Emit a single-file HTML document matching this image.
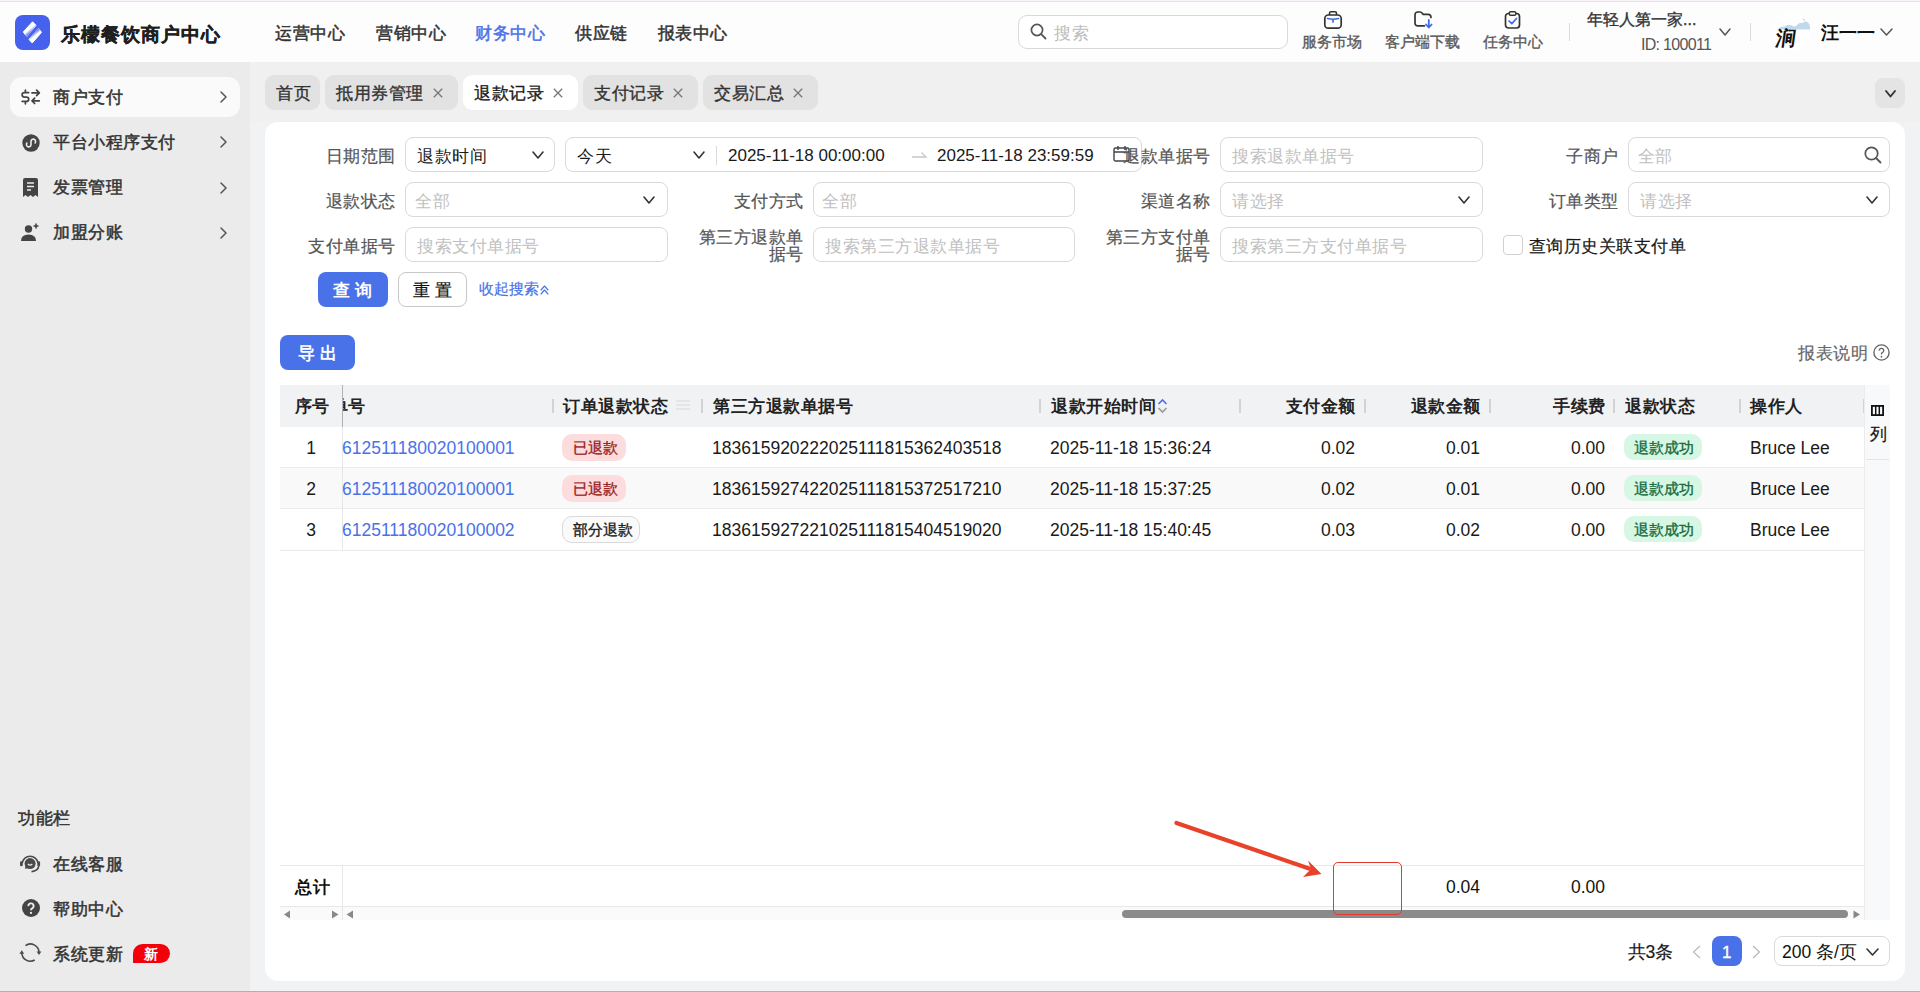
<!DOCTYPE html>
<html><head><meta charset="utf-8">
<style>
*{box-sizing:border-box;margin:0;padding:0}
html,body{width:1920px;height:992px;overflow:hidden}
body{position:relative;font-family:"Liberation Sans",sans-serif;font-size:17.5px;color:#222;background:#f1f2f4}
.a{position:absolute}
.t{position:absolute;white-space:nowrap;line-height:1}
svg{overflow:visible}
</style></head>
<body>
<div class="a" style="left:0px;top:0px;width:1920px;height:62px;background:#fdfdfd;"></div>
<div class="a" style="left:0px;top:0px;width:1920px;height:1px;background:#fbf3fb;"></div>
<div class="a" style="left:0px;top:1px;width:1920px;height:1px;background:#e6e0ea;"></div>
<div class="a" style="left:0px;top:62px;width:250px;height:930px;background:#ebebeb;"></div>
<div class="a" style="left:250px;top:62px;width:1670px;height:60px;background:#f0f0f0;"></div>
<div class="a" style="left:265px;top:122px;width:1640px;height:859px;background:#ffffff;border-radius:13px"></div>
<div class="a" style="left:0px;top:991px;width:1920px;height:1px;background:#b9aea6;"></div>
<div class="a" style="left:15px;top:15px;width:35px;height:35px;background:#4561ee;border-radius:8px"></div>
<svg class="a" style="left:15px;top:15px" width="35" height="35" viewBox="0 0 35 35"><defs><linearGradient id="g1" gradientUnits="userSpaceOnUse" x1="12.9" y1="11.9" x2="16.6" y2="16.2"><stop offset="0" stop-color="#fff"/><stop offset="0.5" stop-color="#fff"/><stop offset="1" stop-color="#fff" stop-opacity="0.25"/></linearGradient><linearGradient id="g2" gradientUnits="userSpaceOnUse" x1="21.9" y1="22.7" x2="18.6" y2="18.6"><stop offset="0" stop-color="#fff"/><stop offset="0.5" stop-color="#fff"/><stop offset="1" stop-color="#fff" stop-opacity="0.25"/></linearGradient></defs><path d="M17.6 6.8 L21.2 10.4 L11.9 22 L8.3 16.9 Z" fill="url(#g1)" stroke="url(#g1)" stroke-width="1" stroke-linejoin="round"/><path d="M23.5 13.1 L26.5 17.4 L17.2 28 L13.8 24.2 Z" fill="url(#g2)" stroke="url(#g2)" stroke-width="1" stroke-linejoin="round"/></svg>
<div class="t" style="left:61px;top:24.5px;font-size:19px;color:#1f1f1f;font-weight:bold;letter-spacing:1px;-webkit-text-stroke:0.3px">乐檬餐饮商户中心</div>
<div class="t" style="left:275px;top:24.5px;font-size:17px;letter-spacing:0.5px;color:#333;-webkit-text-stroke:0.5px;">运营中心</div>
<div class="t" style="left:376px;top:24.5px;font-size:17px;letter-spacing:0.5px;color:#333;-webkit-text-stroke:0.5px;">营销中心</div>
<div class="t" style="left:475px;top:24.5px;font-size:17px;letter-spacing:0.5px;color:#4a72e8;-webkit-text-stroke:0.5px;">财务中心</div>
<div class="t" style="left:575px;top:24.5px;font-size:17px;letter-spacing:0.5px;color:#333;-webkit-text-stroke:0.5px;">供应链</div>
<div class="t" style="left:657.5px;top:24.5px;font-size:17px;letter-spacing:0.5px;color:#333;-webkit-text-stroke:0.5px;">报表中心</div>
<div class="a" style="left:1018px;top:15px;width:270px;height:34px;background:#fff;border:1px solid #d9d9d9;border-radius:9px"></div>
<svg class="a" style="left:1030px;top:23px" width="17" height="17" viewBox="0 0 17 17"><circle cx="7" cy="7" r="5.6" fill="none" stroke="#555" stroke-width="1.7"/><line x1="11.2" y1="11.2" x2="15.5" y2="15.5" stroke="#555" stroke-width="1.8" stroke-linecap="round"/></svg>
<div class="t" style="left:1054px;top:25px;font-size:17px;letter-spacing:0.5px;color:#bbb;">搜索</div>
<svg class="a" style="left:1324px;top:11px" width="18" height="18" viewBox="0 0 18 18"><rect x="5.5" y="0.8" width="7" height="4" rx="1.5" fill="none" stroke="#333" stroke-width="1.6"/><rect x="0.8" y="4" width="16.4" height="13.2" rx="3.5" fill="#fff" stroke="#333" stroke-width="1.7"/><path d="M3.5 7.5 Q9 9 14.5 7.5 M9 8.6 L9 11" fill="none" stroke="#3f6ae8" stroke-width="1.7" stroke-linecap="round"/></svg>
<svg class="a" style="left:1414px;top:11px" width="20" height="18" viewBox="0 0 20 18"><path d="M10.5 14.8 H4 Q1 14.8 1 11.8 V4 Q1 1 4 1 H6 Q7.5 1 8.5 2.5 L9 3.3 H14 Q17 3.3 17 6.5" fill="none" stroke="#333" stroke-width="1.7" stroke-linecap="round" stroke-linejoin="round"/><path d="M14.8 9 V16 M12 13.5 L14.8 16.5 L17.6 13.5" fill="none" stroke="#3f6ae8" stroke-width="1.8" stroke-linecap="round" stroke-linejoin="round"/></svg>
<svg class="a" style="left:1504px;top:11px" width="18" height="18" viewBox="0 0 18 18"><rect x="1.5" y="2.5" width="14" height="14.5" rx="3" fill="#fff" stroke="#333" stroke-width="1.7"/><rect x="5.3" y="0.8" width="6.5" height="3.4" rx="1.3" fill="#fff" stroke="#333" stroke-width="1.5"/><path d="M5 10 L7.8 12.6 L12.5 7.5" fill="none" stroke="#3f6ae8" stroke-width="1.7" stroke-linecap="round" stroke-linejoin="round"/></svg>
<div class="t" style="left:1302px;top:34px;font-size:15px;color:#5a5a5a;-webkit-text-stroke:0.35px;">服务市场</div>
<div class="t" style="left:1385px;top:34px;font-size:15px;color:#5a5a5a;-webkit-text-stroke:0.35px;">客户端下载</div>
<div class="t" style="left:1483px;top:34px;font-size:15px;color:#5a5a5a;-webkit-text-stroke:0.35px;">任务中心</div>
<div class="a" style="left:1569px;top:23px;width:1px;height:18px;background:#d9d9d9;"></div>
<div class="t" style="left:1587px;top:12px;font-size:16px;color:#333;-webkit-text-stroke:0.35px;">年轻人第一家...</div>
<div class="t" style="left:1641px;top:37px;font-size:16px;color:#555;letter-spacing:-0.7px">ID: 100011</div>
<svg class="a" style="left:1719px;top:28px" width="12" height="8" viewBox="0 0 12 8"><polyline points="1,1 6.0,7 11,1" fill="none" stroke="#555" stroke-width="1.5" stroke-linecap="round" stroke-linejoin="round"/></svg>
<div class="a" style="left:1750px;top:23px;width:1px;height:18px;background:#d9d9d9;"></div>
<div class="a" style="left:1772px;top:12px;width:38px;height:38px;background:#fff;border-radius:50%"></div>
<svg class="a" style="left:1776px;top:18px" width="36" height="14" viewBox="0 0 36 14"><path d="M1 11.5 Q5 8 9 8.5 Q12 5.5 16 7.5 Q18 9 20 8 Q23 4 27 5 Q29 2.5 32 4.5 Q34 6 34 9 L34 11.5 Z" fill="#b7d6ea" opacity="0.9"/><path d="M27 1 L29 2.5" stroke="#999" stroke-width="0.6"/></svg>
<div class="t" style="left:1776px;top:28px;font-size:20px;color:#111;font-weight:bold;font-family:'Liberation Serif',serif;transform:skewX(-8deg)">涧</div>
<div class="t" style="left:1821px;top:23.5px;font-size:18px;color:#111;font-weight:bold;">汪一一</div>
<svg class="a" style="left:1880px;top:28px" width="13" height="8" viewBox="0 0 13 8"><polyline points="1,1 6.5,7 12,1" fill="none" stroke="#555" stroke-width="1.5" stroke-linecap="round" stroke-linejoin="round"/></svg>
<div class="a" style="left:10px;top:77px;width:230px;height:40px;background:#fafafa;border-radius:12px"></div>
<div class="t" style="left:53px;top:88.5px;font-size:17px;letter-spacing:0.5px;color:#333;-webkit-text-stroke:0.5px;">商户支付</div>
<svg class="a" style="left:220px;top:91px" width="7" height="12" viewBox="0 0 7 12"><polyline points="1,1 6,6.0 1,11" fill="none" stroke="#555" stroke-width="1.5" stroke-linecap="round" stroke-linejoin="round"/></svg>
<div class="t" style="left:53px;top:133.8px;font-size:17px;letter-spacing:0.5px;color:#333;-webkit-text-stroke:0.5px;">平台小程序支付</div>
<svg class="a" style="left:220px;top:136.3px" width="7" height="12" viewBox="0 0 7 12"><polyline points="1,1 6,6.0 1,11" fill="none" stroke="#555" stroke-width="1.5" stroke-linecap="round" stroke-linejoin="round"/></svg>
<div class="t" style="left:53px;top:179.0px;font-size:17px;letter-spacing:0.5px;color:#333;-webkit-text-stroke:0.5px;">发票管理</div>
<svg class="a" style="left:220px;top:181.5px" width="7" height="12" viewBox="0 0 7 12"><polyline points="1,1 6,6.0 1,11" fill="none" stroke="#555" stroke-width="1.5" stroke-linecap="round" stroke-linejoin="round"/></svg>
<div class="t" style="left:53px;top:224.2px;font-size:17px;letter-spacing:0.5px;color:#333;-webkit-text-stroke:0.5px;">加盟分账</div>
<svg class="a" style="left:220px;top:226.7px" width="7" height="12" viewBox="0 0 7 12"><polyline points="1,1 6,6.0 1,11" fill="none" stroke="#555" stroke-width="1.5" stroke-linecap="round" stroke-linejoin="round"/></svg>
<svg class="a" style="left:21px;top:89px" width="20" height="16" viewBox="0 0 20 16"><path d="M7.6 3.6 H3.4 Q1.1 3.6 1.1 5.8 Q1.1 8 3.4 8 H5.4 Q7.7 8 7.7 10.2 Q7.7 12.4 5.4 12.4 H1.2 M4.4 1.2 V3.6 M4.4 12.4 V14.8" fill="none" stroke="#444" stroke-width="1.75" stroke-linecap="round" stroke-linejoin="round"/><path d="M11 3.9 H18.3 M15.6 1.2 L18.3 3.9 L15.6 6.6 M18.3 11.8 H11 M13.7 9.1 L11 11.8 L13.7 14.5" fill="none" stroke="#444" stroke-width="1.75" stroke-linecap="round" stroke-linejoin="round"/></svg>
<svg class="a" style="left:21.5px;top:133.5px" width="18" height="18" viewBox="0 0 18 18"><circle cx="9" cy="9" r="8.7" fill="#444"/><path d="M4.9 9.1 A2.3 2.3 0 1 0 9 10.7 V7.3 A2.3 2.3 0 1 1 13.1 8.9" fill="none" stroke="#ececec" stroke-width="1.6" stroke-linecap="round"/></svg>
<svg class="a" style="left:23px;top:178px" width="15" height="19" viewBox="0 0 15 19"><path d="M2 0 H13 Q15 0 15 2 V19 L12.5 17 L10 19 L7.5 17 L5 19 L2.5 17 L0 19 V2 Q0 0 2 0 Z" fill="#444"/><path d="M4 5 H11 M4 8.5 H11 M4 12 H8" stroke="#ebebeb" stroke-width="1.6"/></svg>
<svg class="a" style="left:21px;top:223px" width="19" height="19" viewBox="0 0 19 19"><circle cx="7.5" cy="6" r="3.7" fill="#444"/><path d="M0 18 Q0 11.5 7.5 11.5 Q15 11.5 15 18 Z" fill="#444"/><path d="M15 0.5 V5.5 M12.5 3 H17.5" stroke="#444" stroke-width="1.6"/></svg>
<div class="t" style="left:18px;top:810px;font-size:17px;letter-spacing:0.5px;color:#333;-webkit-text-stroke:0.5px;">功能栏</div>
<div class="t" style="left:53px;top:855.5px;font-size:17px;letter-spacing:0.5px;color:#333;-webkit-text-stroke:0.5px;">在线客服</div>
<div class="t" style="left:53px;top:900.5px;font-size:17px;letter-spacing:0.5px;color:#333;-webkit-text-stroke:0.5px;">帮助中心</div>
<div class="t" style="left:53px;top:945.5px;font-size:17px;letter-spacing:0.5px;color:#333;-webkit-text-stroke:0.5px;">系统更新</div>
<svg class="a" style="left:19px;top:854px" width="23" height="19" viewBox="0 0 23 19"><path d="M3.2 9 A8 8 0 0 1 19 9" fill="none" stroke="#4a4a4a" stroke-width="1.6"/><rect x="1" y="7.2" width="2.8" height="5" rx="1.3" fill="#4a4a4a"/><rect x="18.3" y="7.2" width="2.8" height="5" rx="1.3" fill="#4a4a4a"/><circle cx="11.1" cy="9.6" r="5.5" fill="#4a4a4a"/><path d="M6.6 11.5 L6 15 L9.3 13.9 Z" fill="#4a4a4a"/><path d="M8.9 10 Q11.1 12.3 13.3 10" fill="none" stroke="#ebebeb" stroke-width="1.3"/><path d="M19.8 12 Q19 16.9 12.5 17.6" fill="none" stroke="#4a4a4a" stroke-width="1.6"/></svg>
<svg class="a" style="left:21.5px;top:899px" width="18" height="18" viewBox="0 0 18 18"><circle cx="9" cy="9" r="9" fill="#444"/><path d="M6.4 7.1 A2.6 2.6 0 1 1 10.2 9.3 Q9 9.9 9 11.2" fill="none" stroke="#ebebeb" stroke-width="1.9"/><circle cx="9" cy="13.9" r="1.15" fill="#ebebeb"/></svg>
<svg class="a" style="left:19px;top:942px" width="23" height="21" viewBox="0 0 23 21"><path d="M6.47 3.56 A8.6 8.6 0 0 1 20 10.2" fill="none" stroke="#4a4a4a" stroke-width="1.6"/><path d="M17.6 9.4 H22.4 L20 13 Z" fill="#4a4a4a"/><path d="M15.7 18.05 A8.6 8.6 0 0 1 2.8 11" fill="none" stroke="#4a4a4a" stroke-width="1.6"/><path d="M0.4 11.8 H5.2 L2.8 8.2 Z" fill="#4a4a4a"/></svg>
<div class="a" style="left:133px;top:944px;width:37px;height:19px;background:#f5000a;border-radius:10px 10px 10px 0"></div>
<div class="t" style="left:143.5px;top:946.5px;font-size:14px;color:#fff;font-weight:bold;">新</div>
<div class="a" style="left:265px;top:75px;width:55px;height:35px;background:#e2e2e2;border-radius:9px"></div>
<div class="t" style="left:276px;top:85px;font-size:17px;letter-spacing:0.5px;color:#333;-webkit-text-stroke:0.35px;">首页</div>
<div class="a" style="left:325px;top:75px;width:133px;height:35px;background:#e2e2e2;border-radius:9px"></div>
<div class="t" style="left:336px;top:85px;font-size:17px;letter-spacing:0.5px;color:#333;-webkit-text-stroke:0.35px;">抵用券管理</div>
<svg class="a" style="left:433px;top:88px" width="10" height="10" viewBox="0 0 10 10"><path d="M0.8 0.8 L9.2 9.2 M9.2 0.8 L0.8 9.2" stroke="#777" stroke-width="1.3"/></svg>
<div class="a" style="left:463px;top:75px;width:115px;height:35px;background:#fff;border-radius:9px"></div>
<div class="t" style="left:474px;top:85px;font-size:17px;letter-spacing:0.5px;color:#1a1a1a;-webkit-text-stroke:0.35px;">退款记录</div>
<svg class="a" style="left:553px;top:88px" width="10" height="10" viewBox="0 0 10 10"><path d="M0.8 0.8 L9.2 9.2 M9.2 0.8 L0.8 9.2" stroke="#777" stroke-width="1.3"/></svg>
<div class="a" style="left:583px;top:75px;width:115px;height:35px;background:#e2e2e2;border-radius:9px"></div>
<div class="t" style="left:594px;top:85px;font-size:17px;letter-spacing:0.5px;color:#333;-webkit-text-stroke:0.35px;">支付记录</div>
<svg class="a" style="left:673px;top:88px" width="10" height="10" viewBox="0 0 10 10"><path d="M0.8 0.8 L9.2 9.2 M9.2 0.8 L0.8 9.2" stroke="#777" stroke-width="1.3"/></svg>
<div class="a" style="left:703px;top:75px;width:115px;height:35px;background:#e2e2e2;border-radius:9px"></div>
<div class="t" style="left:714px;top:85px;font-size:17px;letter-spacing:0.5px;color:#333;-webkit-text-stroke:0.35px;">交易汇总</div>
<svg class="a" style="left:793px;top:88px" width="10" height="10" viewBox="0 0 10 10"><path d="M0.8 0.8 L9.2 9.2 M9.2 0.8 L0.8 9.2" stroke="#777" stroke-width="1.3"/></svg>
<div class="a" style="left:1875px;top:78px;width:30px;height:30px;background:#e4e4e4;border-radius:8px"></div>
<svg class="a" style="left:1884.5px;top:89.5px" width="11" height="7.5" viewBox="0 0 11 7.5"><polyline points="1,1 5.5,6.5 10,1" fill="none" stroke="#333" stroke-width="1.9" stroke-linecap="round" stroke-linejoin="round"/></svg>
<div class="a" style="left:405px;top:137px;width:150px;height:35px;background:#fff;border:1px solid #d9d9d9;border-radius:8px;"></div>
<div class="t" style="left:417px;top:147.5px;font-size:17px;letter-spacing:0.5px;color:#1a1a1a;">退款时间</div>
<svg class="a" style="left:532px;top:151px" width="12" height="8" viewBox="0 0 12 8"><polyline points="1,1 6.0,7 11,1" fill="none" stroke="#333" stroke-width="1.6" stroke-linecap="round" stroke-linejoin="round"/></svg>
<div class="a" style="left:565px;top:137px;width:577px;height:35px;background:#fff;border:1px solid #d9d9d9;border-radius:8px;"></div>
<div class="t" style="left:577px;top:147.5px;font-size:17px;letter-spacing:0.5px;color:#1a1a1a;">今天</div>
<svg class="a" style="left:693px;top:151px" width="12" height="8" viewBox="0 0 12 8"><polyline points="1,1 6.0,7 11,1" fill="none" stroke="#333" stroke-width="1.6" stroke-linecap="round" stroke-linejoin="round"/></svg>
<div class="a" style="left:716px;top:146px;width:1px;height:19px;background:#d9d9d9;"></div>
<div class="t" style="left:728px;top:147px;font-size:17px;color:#1a1a1a;">2025-11-18 00:00:00</div>
<svg class="a" style="left:911px;top:151px" width="16" height="8" viewBox="0 0 16 8"><path d="M1 6 H15 L10.5 1.5" fill="none" stroke="#c8c8c8" stroke-width="1.3"/></svg>
<div class="t" style="left:937px;top:147px;font-size:17px;color:#1a1a1a;">2025-11-18 23:59:59</div>
<svg class="a" style="left:1113px;top:145px" width="17" height="17" viewBox="0 0 17 17"><rect x="1" y="3" width="15" height="13" rx="1.5" fill="none" stroke="#444" stroke-width="1.4"/><path d="M5 1 V5 M12 1 V5 M1 7 H16" stroke="#444" stroke-width="1.4"/></svg>
<div class="a" style="left:1220px;top:137px;width:263px;height:35px;background:#fff;border:1px solid #d9d9d9;border-radius:8px;"></div>
<div class="t" style="left:1232px;top:147.5px;font-size:17px;letter-spacing:0.5px;color:#bfbfbf;">搜索退款单据号</div>
<div class="a" style="left:1628px;top:137px;width:262px;height:35px;background:#fff;border:1px solid #d9d9d9;border-radius:8px;"></div>
<div class="t" style="left:1637.5px;top:147.5px;font-size:17px;letter-spacing:0.5px;color:#bfbfbf;">全部</div>
<svg class="a" style="left:1864px;top:146px" width="18" height="18" viewBox="0 0 18 18"><circle cx="7.5" cy="7.5" r="6.2" fill="none" stroke="#555" stroke-width="1.7"/><line x1="12" y1="12" x2="16.5" y2="16.5" stroke="#555" stroke-width="1.8" stroke-linecap="round"/></svg>
<div class="a" style="left:405px;top:182px;width:263px;height:35px;background:#fff;border:1px solid #d9d9d9;border-radius:8px;"></div>
<div class="t" style="left:415px;top:192.5px;font-size:17px;letter-spacing:0.5px;color:#bfbfbf;">全部</div>
<svg class="a" style="left:643px;top:196px" width="12" height="8" viewBox="0 0 12 8"><polyline points="1,1 6.0,7 11,1" fill="none" stroke="#333" stroke-width="1.6" stroke-linecap="round" stroke-linejoin="round"/></svg>
<div class="a" style="left:813px;top:182px;width:262px;height:35px;background:#fff;border:1px solid #d9d9d9;border-radius:8px;"></div>
<div class="t" style="left:822px;top:192.5px;font-size:17px;letter-spacing:0.5px;color:#bfbfbf;">全部</div>
<div class="a" style="left:1220px;top:182px;width:263px;height:35px;background:#fff;border:1px solid #d9d9d9;border-radius:8px;"></div>
<div class="t" style="left:1232px;top:192.5px;font-size:17px;letter-spacing:0.5px;color:#bfbfbf;">请选择</div>
<svg class="a" style="left:1458px;top:196px" width="12" height="8" viewBox="0 0 12 8"><polyline points="1,1 6.0,7 11,1" fill="none" stroke="#333" stroke-width="1.6" stroke-linecap="round" stroke-linejoin="round"/></svg>
<div class="a" style="left:1628px;top:182px;width:262px;height:35px;background:#fff;border:1px solid #d9d9d9;border-radius:8px;"></div>
<div class="t" style="left:1640px;top:192.5px;font-size:17px;letter-spacing:0.5px;color:#bfbfbf;">请选择</div>
<svg class="a" style="left:1866px;top:196px" width="12" height="8" viewBox="0 0 12 8"><polyline points="1,1 6.0,7 11,1" fill="none" stroke="#333" stroke-width="1.6" stroke-linecap="round" stroke-linejoin="round"/></svg>
<div class="a" style="left:405px;top:227px;width:263px;height:35px;background:#fff;border:1px solid #d9d9d9;border-radius:8px;"></div>
<div class="t" style="left:417px;top:237.5px;font-size:17px;letter-spacing:0.5px;color:#bfbfbf;">搜索支付单据号</div>
<div class="a" style="left:813px;top:227px;width:262px;height:35px;background:#fff;border:1px solid #d9d9d9;border-radius:8px;"></div>
<div class="t" style="left:825px;top:237.5px;font-size:17px;letter-spacing:0.5px;color:#bfbfbf;">搜索第三方退款单据号</div>
<div class="a" style="left:1220px;top:227px;width:263px;height:35px;background:#fff;border:1px solid #d9d9d9;border-radius:8px;"></div>
<div class="t" style="left:1232px;top:237.5px;font-size:17px;letter-spacing:0.5px;color:#bfbfbf;">搜索第三方支付单据号</div>
<div class="a" style="left:1503px;top:235px;width:20px;height:20px;background:#fff;border:1px solid #d0d0d0;border-radius:4px"></div>
<div class="t" style="left:1528.5px;top:237.5px;font-size:17px;letter-spacing:0.5px;color:#1a1a1a;-webkit-text-stroke:0.2px;">查询历史关联支付单</div>
<div class="t" style="right:1524.5px;top:147.5px;font-size:17px;letter-spacing:0.5px;color:#555;text-align:right;-webkit-text-stroke:0.2px;">日期范围</div>
<div class="t" style="right:1524.5px;top:192.5px;font-size:17px;letter-spacing:0.5px;color:#555;text-align:right;-webkit-text-stroke:0.2px;">退款状态</div>
<div class="t" style="right:1524.5px;top:237.5px;font-size:17px;letter-spacing:0.5px;color:#555;text-align:right;-webkit-text-stroke:0.2px;">支付单据号</div>
<div class="t" style="right:1116.5px;top:192.5px;font-size:17px;letter-spacing:0.5px;color:#555;text-align:right;-webkit-text-stroke:0.2px;">支付方式</div>
<div class="t" style="right:1116.5px;top:228.5px;font-size:17px;letter-spacing:0.5px;color:#555;text-align:right;-webkit-text-stroke:0.2px;">第三方退款单</div>
<div class="t" style="right:1116.5px;top:246px;font-size:17px;letter-spacing:0.5px;color:#555;text-align:right;-webkit-text-stroke:0.2px;">据号</div>
<div class="t" style="right:709.5px;top:147.5px;font-size:17px;letter-spacing:0.5px;color:#555;text-align:right;-webkit-text-stroke:0.2px;">退款单据号</div>
<div class="t" style="right:709.5px;top:192.5px;font-size:17px;letter-spacing:0.5px;color:#555;text-align:right;-webkit-text-stroke:0.2px;">渠道名称</div>
<div class="t" style="right:709.5px;top:228.5px;font-size:17px;letter-spacing:0.5px;color:#555;text-align:right;-webkit-text-stroke:0.2px;">第三方支付单</div>
<div class="t" style="right:709.5px;top:246px;font-size:17px;letter-spacing:0.5px;color:#555;text-align:right;-webkit-text-stroke:0.2px;">据号</div>
<div class="t" style="right:301.5px;top:147.5px;font-size:17px;letter-spacing:0.5px;color:#555;text-align:right;-webkit-text-stroke:0.2px;">子商户</div>
<div class="t" style="right:301.5px;top:192.5px;font-size:17px;letter-spacing:0.5px;color:#555;text-align:right;-webkit-text-stroke:0.2px;">订单类型</div>
<div class="a" style="left:318px;top:272px;width:70px;height:35px;background:#4a72e8;border-radius:8px"></div>
<div class="t" style="left:333px;top:282px;font-size:17px;letter-spacing:0.5px;color:#fff;font-weight:bold;letter-spacing:0.3px">查&nbsp;询</div>
<div class="a" style="left:398px;top:272px;width:69px;height:35px;background:#fff;border:1px solid #c8c8c8;border-radius:8px"></div>
<div class="t" style="left:413px;top:282px;font-size:17px;letter-spacing:0.5px;color:#111;-webkit-text-stroke:0.2px;letter-spacing:0px">重&nbsp;置</div>
<div class="t" style="left:478.5px;top:281px;font-size:15px;color:#4a72e8;-webkit-text-stroke:0.2px;">收起搜索</div>
<svg class="a" style="left:540px;top:284.5px" width="9" height="6" viewBox="0 0 9 6"><polyline points="1,5 4.5,1 8,5" fill="none" stroke="#4a72e8" stroke-width="1.15" stroke-linecap="round" stroke-linejoin="round"/></svg>
<svg class="a" style="left:540px;top:289px" width="9" height="6" viewBox="0 0 9 6"><polyline points="1,5 4.5,1 8,5" fill="none" stroke="#4a72e8" stroke-width="1.15" stroke-linecap="round" stroke-linejoin="round"/></svg>
<div class="a" style="left:280px;top:335px;width:75px;height:35px;background:#4a72e8;border-radius:8px"></div>
<div class="t" style="left:297.5px;top:345px;font-size:17px;letter-spacing:0.5px;color:#fff;font-weight:bold;letter-spacing:0.3px">导&nbsp;出</div>
<div class="t" style="left:1798px;top:344.5px;font-size:17px;letter-spacing:0.5px;color:#666;-webkit-text-stroke:0.2px;">报表说明</div>
<svg class="a" style="left:1873px;top:344px" width="17" height="17" viewBox="0 0 17 17"><circle cx="8.5" cy="8.5" r="7.6" fill="none" stroke="#666" stroke-width="1.4"/><path d="M6.3 6.6 A2.2 2.2 0 1 1 9.2 8.6 Q8.5 9 8.5 10 V10.6" fill="none" stroke="#666" stroke-width="1.3"/><circle cx="8.5" cy="12.7" r="0.9" fill="#666"/></svg>
<div class="a" style="left:280px;top:385px;width:1584px;height:41.5px;background:#f1f2f4;"></div>
<div class="a" style="left:280px;top:467.5px;width:1584px;height:41.25px;background:#f9f9fa;"></div>
<div class="a" style="left:280px;top:467px;width:1584px;height:1px;background:#ebebeb;"></div>
<div class="a" style="left:280px;top:508.3px;width:1584px;height:1px;background:#ebebeb;"></div>
<div class="a" style="left:280px;top:549.5px;width:1584px;height:1px;background:#ebebeb;"></div>
<div class="a" style="left:342px;top:385px;width:1px;height:41.5px;background:#aeb1b6;"></div>
<div class="a" style="left:342px;top:426.5px;width:1px;height:123px;background:#e6e6e6;"></div>
<div class="t" style="left:294.5px;top:397.5px;font-size:17px;letter-spacing:0.5px;color:#222;font-weight:bold;">序号</div>
<div class="t" style="left:343px;top:397.5px;font-size:17px;letter-spacing:0.5px;color:#222;font-weight:bold;"><span style="display:inline-block;width:5px;overflow:hidden;vertical-align:top;direction:rtl">单</span>号</div>
<div class="t" style="left:563px;top:397.5px;font-size:17px;letter-spacing:0.5px;color:#222;font-weight:bold;">订单退款状态</div>
<div class="t" style="left:713px;top:397.5px;font-size:17px;letter-spacing:0.5px;color:#222;font-weight:bold;">第三方退款单据号</div>
<div class="t" style="left:1051px;top:397.5px;font-size:17px;letter-spacing:0.5px;color:#222;font-weight:bold;">退款开始时间</div>
<div class="t" style="right:564.5px;top:397.5px;font-size:17px;letter-spacing:0.5px;color:#222;text-align:right;font-weight:bold;">支付金额</div>
<div class="t" style="right:439.5px;top:397.5px;font-size:17px;letter-spacing:0.5px;color:#222;text-align:right;font-weight:bold;">退款金额</div>
<div class="t" style="right:314.5px;top:397.5px;font-size:17px;letter-spacing:0.5px;color:#222;text-align:right;font-weight:bold;">手续费</div>
<div class="t" style="left:1625px;top:397.5px;font-size:17px;letter-spacing:0.5px;color:#222;font-weight:bold;">退款状态</div>
<div class="t" style="left:1750px;top:397.5px;font-size:17px;letter-spacing:0.5px;color:#222;font-weight:bold;">操作人</div>
<div class="a" style="left:551.5px;top:399px;width:2px;height:13.5px;background:#d3d3d3;"></div>
<div class="a" style="left:700.5px;top:399px;width:2px;height:13.5px;background:#d3d3d3;"></div>
<div class="a" style="left:1039px;top:399px;width:2px;height:13.5px;background:#d3d3d3;"></div>
<div class="a" style="left:1238.5px;top:399px;width:2px;height:13.5px;background:#d3d3d3;"></div>
<div class="a" style="left:1363.5px;top:399px;width:2px;height:13.5px;background:#d3d3d3;"></div>
<div class="a" style="left:1489px;top:399px;width:2px;height:13.5px;background:#d3d3d3;"></div>
<div class="a" style="left:1613px;top:399px;width:2px;height:13.5px;background:#d3d3d3;"></div>
<div class="a" style="left:1739px;top:399px;width:2px;height:13.5px;background:#d3d3d3;"></div>
<div class="a" style="left:1862.5px;top:399px;width:2px;height:13.5px;background:#d3d3d3;"></div>
<svg class="a" style="left:676px;top:400px" width="14" height="10" viewBox="0 0 14 10"><path d="M0 1 H14 M0 5 H14 M0 9 H14" stroke="#d8d8d8" stroke-width="1.2"/></svg>
<svg class="a" style="left:1157px;top:398px" width="11" height="16" viewBox="0 0 11 16"><polyline points="1.5,6 5.5,2 9.5,6" fill="none" stroke="#4a72e8" stroke-width="1.6"/><polyline points="1.5,10 5.5,14 9.5,10" fill="none" stroke="#999" stroke-width="1.6"/></svg>
<div class="t" style="left:280px;width:62px;text-align:center;top:439.625px;font-size:17.5px;color:#1a1a1a">1</div>
<div class="t" style="left:342px;top:439.625px;font-size:17.5px;color:#4a72e8;">612511180020100001</div>
<div class="a" style="left:562px;top:433.625px;width:64px;height:27px;background:#fcdcdc;border-radius:10px"></div>
<div class="t" style="left:572.5px;top:440.125px;font-size:15px;color:#9a1d1d;-webkit-text-stroke:0.35px;">已退款</div>
<div class="t" style="left:712px;top:439.625px;font-size:17.5px;color:#1a1a1a;">183615920222025111815362403518</div>
<div class="t" style="left:1050px;top:439.625px;font-size:17.5px;color:#1a1a1a;">2025-11-18 15:36:24</div>
<div class="t" style="right:565px;top:439.625px;font-size:17.5px;color:#1a1a1a;text-align:right;">0.02</div>
<div class="t" style="right:440px;top:439.625px;font-size:17.5px;color:#1a1a1a;text-align:right;">0.01</div>
<div class="t" style="right:315px;top:439.625px;font-size:17.5px;color:#1a1a1a;text-align:right;">0.00</div>
<div class="a" style="left:1624px;top:434.125px;width:77.5px;height:26px;background:#d5f7e3;border-radius:10px"></div>
<div class="t" style="left:1633.5px;top:440.125px;font-size:15px;color:#176b3e;-webkit-text-stroke:0.35px;">退款成功</div>
<div class="t" style="left:1750px;top:439.625px;font-size:17.5px;color:#1a1a1a;">Bruce Lee</div>
<div class="t" style="left:280px;width:62px;text-align:center;top:480.625px;font-size:17.5px;color:#1a1a1a">2</div>
<div class="t" style="left:342px;top:480.625px;font-size:17.5px;color:#4a72e8;">612511180020100001</div>
<div class="a" style="left:562px;top:474.625px;width:64px;height:27px;background:#fcdcdc;border-radius:10px"></div>
<div class="t" style="left:572.5px;top:481.125px;font-size:15px;color:#9a1d1d;-webkit-text-stroke:0.35px;">已退款</div>
<div class="t" style="left:712px;top:480.625px;font-size:17.5px;color:#1a1a1a;">183615927422025111815372517210</div>
<div class="t" style="left:1050px;top:480.625px;font-size:17.5px;color:#1a1a1a;">2025-11-18 15:37:25</div>
<div class="t" style="right:565px;top:480.625px;font-size:17.5px;color:#1a1a1a;text-align:right;">0.02</div>
<div class="t" style="right:440px;top:480.625px;font-size:17.5px;color:#1a1a1a;text-align:right;">0.01</div>
<div class="t" style="right:315px;top:480.625px;font-size:17.5px;color:#1a1a1a;text-align:right;">0.00</div>
<div class="a" style="left:1624px;top:475.125px;width:77.5px;height:26px;background:#d5f7e3;border-radius:10px"></div>
<div class="t" style="left:1633.5px;top:481.125px;font-size:15px;color:#176b3e;-webkit-text-stroke:0.35px;">退款成功</div>
<div class="t" style="left:1750px;top:480.625px;font-size:17.5px;color:#1a1a1a;">Bruce Lee</div>
<div class="t" style="left:280px;width:62px;text-align:center;top:521.925px;font-size:17.5px;color:#1a1a1a">3</div>
<div class="t" style="left:342px;top:521.925px;font-size:17.5px;color:#4a72e8;">612511180020100002</div>
<div class="a" style="left:562px;top:515.925px;width:78px;height:27px;background:#fafafa;border:1px solid #d9d9d9;border-radius:10px"></div>
<div class="t" style="left:572.5px;top:522.425px;font-size:15px;color:#1a1a1a;-webkit-text-stroke:0.35px;">部分退款</div>
<div class="t" style="left:712px;top:521.925px;font-size:17.5px;color:#1a1a1a;">183615927221025111815404519020</div>
<div class="t" style="left:1050px;top:521.925px;font-size:17.5px;color:#1a1a1a;">2025-11-18 15:40:45</div>
<div class="t" style="right:565px;top:521.925px;font-size:17.5px;color:#1a1a1a;text-align:right;">0.03</div>
<div class="t" style="right:440px;top:521.925px;font-size:17.5px;color:#1a1a1a;text-align:right;">0.02</div>
<div class="t" style="right:315px;top:521.925px;font-size:17.5px;color:#1a1a1a;text-align:right;">0.00</div>
<div class="a" style="left:1624px;top:516.425px;width:77.5px;height:26px;background:#d5f7e3;border-radius:10px"></div>
<div class="t" style="left:1633.5px;top:522.425px;font-size:15px;color:#176b3e;-webkit-text-stroke:0.35px;">退款成功</div>
<div class="t" style="left:1750px;top:521.925px;font-size:17.5px;color:#1a1a1a;">Bruce Lee</div>
<div class="a" style="left:1865px;top:385px;width:25px;height:535px;background:#f8f9fb;"></div>
<div class="a" style="left:1864px;top:385px;width:1px;height:535px;background:#ececec;"></div>
<svg class="a" style="left:1871px;top:405px" width="13" height="11" viewBox="0 0 13 11"><rect x="0.9" y="0.9" width="11.2" height="9.2" fill="none" stroke="#111" stroke-width="1.8"/><path d="M4.7 1 V10 M8.3 1 V10" stroke="#111" stroke-width="1.5"/></svg>
<div class="t" style="left:1870px;top:426px;font-size:17px;color:#111;-webkit-text-stroke:0.2px;">列</div>
<div class="a" style="left:1866px;top:459px;width:23px;height:1px;background:#e5e5e5;"></div>
<div class="a" style="left:280px;top:865px;width:1584px;height:1px;background:#e8e8e8;"></div>
<div class="a" style="left:280px;top:906px;width:1584px;height:1px;background:#e8e8e8;"></div>
<div class="t" style="left:295px;top:878.5px;font-size:17px;letter-spacing:0.5px;color:#111;font-weight:bold;">总计</div>
<div class="t" style="right:440px;top:879px;font-size:17.5px;color:#111;text-align:right;">0.04</div>
<div class="t" style="right:315px;top:879px;font-size:17.5px;color:#111;text-align:right;">0.00</div>
<div class="a" style="left:280px;top:907px;width:1584px;height:13px;background:#fafafa;"></div>
<svg class="a" style="left:283px;top:910px" width="80" height="9" viewBox="0 0 80 9"><path d="M7 0.5 V8.5 L1 4.5 Z M49 0.5 V8.5 L55.5 4.5 Z M70 0.5 V8.5 L63.5 4.5 Z" fill="#888"/></svg>
<div class="a" style="left:1122px;top:910px;width:726px;height:7.5px;background:#8a8a8a;border-radius:4px"></div>
<div class="a" style="left:342px;top:866px;width:1px;height:54px;background:#e6e6e6;"></div>
<svg class="a" style="left:1853px;top:910px" width="8" height="9" viewBox="0 0 8 9"><path d="M0.5 0.5 V8.5 L7 4.5 Z" fill="#888"/></svg>
<div class="a" style="left:1333px;top:862px;width:68.5px;height:52.5px;background:transparent;border:1.3px solid #e23b2c;border-radius:5px"></div>
<svg class="a" style="left:0;top:0" width="1920" height="992" viewBox="0 0 1920 992"><line x1="1176.5" y1="823" x2="1309" y2="868.5" stroke="#e8432a" stroke-width="4.2" stroke-linecap="round"/><path d="M1321.5 874 L1308 860.5 L1311 869 L1303 877 Z" fill="#e8432a"/></svg>
<div class="t" style="left:1627.5px;top:943.5px;font-size:17.5px;color:#1a1a1a;-webkit-text-stroke:0.2px;">共3条</div>
<svg class="a" style="left:1692px;top:945px" width="9" height="14" viewBox="0 0 9 14"><polyline points="8,1 1.5,7 8,13" fill="none" stroke="#bbb" stroke-width="1.3"/></svg>
<div class="a" style="left:1712px;top:936px;width:30px;height:29.5px;background:#4a72e8;border-radius:8px"></div>
<div class="t" style="left:1722px;top:943.5px;font-size:17px;color:#fff;-webkit-text-stroke:0.35px;">1</div>
<svg class="a" style="left:1752px;top:945px" width="9" height="14" viewBox="0 0 9 14"><polyline points="1,1 7.5,7 1,13" fill="none" stroke="#bbb" stroke-width="1.3"/></svg>
<div class="a" style="left:1774px;top:936px;width:116px;height:29.5px;background:#fff;border:1px solid #d9d9d9;border-radius:8px"></div>
<div class="t" style="left:1782px;top:944px;font-size:17.5px;color:#111;">200 条/页</div>
<svg class="a" style="left:1866px;top:948px" width="13" height="8" viewBox="0 0 13 8"><polyline points="1,1 6.5,7 12,1" fill="none" stroke="#333" stroke-width="1.6" stroke-linecap="round" stroke-linejoin="round"/></svg>
</body></html>
